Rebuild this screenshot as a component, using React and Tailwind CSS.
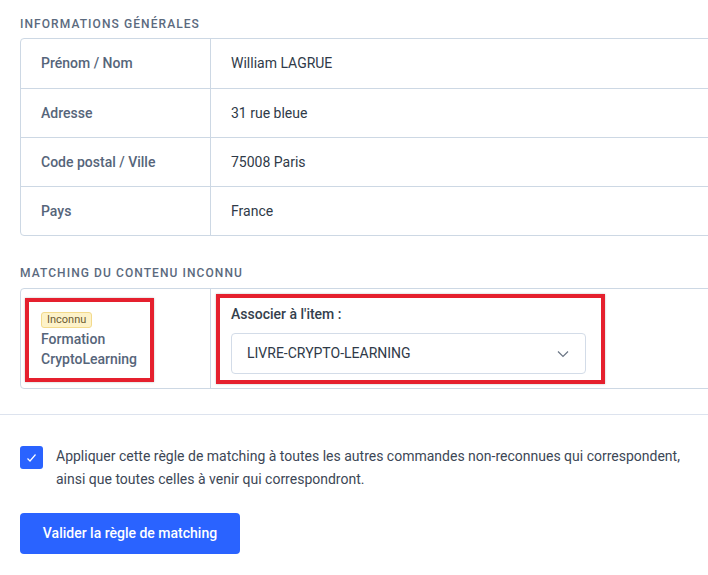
import React from 'react';

const rows = [
  { label: 'Prénom / Nom', value: 'William LAGRUE' },
  { label: 'Adresse', value: '31 rue bleue' },
  { label: 'Code postal / Ville', value: '75008 Paris' },
  { label: 'Pays', value: 'France' },
];

export default function App() {
  return (
    <div className="w-[708px] h-[575px] overflow-hidden bg-white font-['Roboto',sans-serif] text-[14px]">
      <div className="pl-5">
        {/* Informations générales */}
        <div className="pt-[17px] pb-[7px] text-[12px] leading-[14px] font-medium tracking-[0.09em] text-[#5b6a7e]">
          INFORMATIONS GÉNÉRALES
        </div>
        <div className="w-[720px] border border-[#cdd8e4] rounded-l-[4px]">
          {rows.map((r, i) => (
            <div key={r.label} className={`flex h-[49px] ${i > 0 ? 'border-t border-[#cdd8e4]' : ''}`}>
              <div className="w-[190px] shrink-0 border-r border-[#cdd8e4] pl-5 flex items-center font-medium text-[#56657a]">
                {r.label}
              </div>
              <div className="pl-5 flex items-center text-[#2f3a48]">{r.value}</div>
            </div>
          ))}
        </div>

        {/* Matching */}
        <div className="pt-[30px] pb-[8px] text-[12px] leading-[14px] font-medium tracking-[0.09em] text-[#5b6a7e]">
          MATCHING DU CONTENU INCONNU
        </div>
        <div className="w-[720px] border border-[#cdd8e4] rounded-l-[4px] flex">
          <div className="relative w-[190px] shrink-0 border-r border-[#cdd8e4] pl-5 pt-[23px] pb-[19px]">
            <span className="block w-fit px-[5px] h-[16px] leading-[14px] text-[11px] rounded-[3px] bg-[#fdf2c9] border border-[#f3da8c] text-[#6b5b33]">
              Inconnu
            </span>
            <div className="font-medium leading-[20px] text-[#56657a] mt-[1px]">
              Formation
              <br />
              CryptoLearning
            </div>
            <div className="absolute left-[4px] top-[9px] w-[129px] h-[84px] border-4 border-[#e5202e] shadow-[0_0_2px_rgba(0,0,0,0.25)]" />
          </div>
          <div className="relative pl-5 pt-[15px] pb-[14px]">
            <div className="font-medium leading-[20px] text-[#343f4d]">Associer à l'item :</div>
            <div className="mt-[9px] w-[355px] h-[41px] border border-[#d3dce8] rounded-[4px] flex items-center justify-between pl-[15px] pr-[16px] text-[#2f3a48]">
              <span>LIVRE-CRYPTO-LEARNING</span>
              <svg width="12" height="8" viewBox="0 0 12 8" fill="none" stroke="#6b7685" strokeWidth="1.2">
                <path d="M1 1.5 L6 6.5 L11 1.5" />
              </svg>
            </div>
            <div className="absolute left-[5px] top-[5px] w-[389px] h-[90px] border-4 border-[#e5202e] shadow-[0_0_2px_rgba(0,0,0,0.25)]" />
          </div>
        </div>
      </div>

      <div className="mt-[25px] border-t border-[#dde3ee]" />

      <div className="pl-5 pt-[30px]">
        <div className="flex gap-[13px]">
          <div className="w-[23px] h-[23px] shrink-0 rounded-[3px] bg-[#2a63ff] flex items-center justify-center mt-[1px]">
            <svg width="11" height="10" viewBox="0 0 11 10" fill="none" stroke="white" strokeWidth="1.2">
              <path d="M1.5 5.5 L4 8 L9.5 1.5" />
            </svg>
          </div>
          <div className="leading-[23px] text-[#3d4756]">
            Appliquer cette règle de matching à toutes les autres commandes non-reconnues qui correspondent,
            <br />
            ainsi que toutes celles à venir qui correspondront.
          </div>
        </div>
        <button className="mt-[22px] w-[220px] h-[41px] rounded-[4px] bg-[#2a63ff] text-white font-medium text-[14px]">
          Valider la règle de matching
        </button>
      </div>
    </div>
  );
}
